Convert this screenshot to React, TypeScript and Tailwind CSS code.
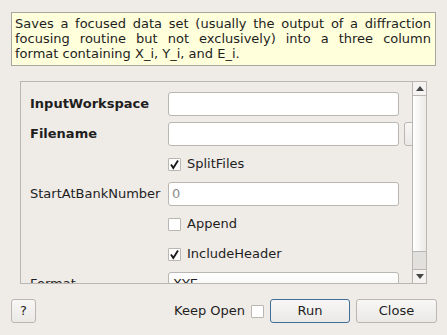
import React from 'react';

function Check({ checked }: { checked?: boolean }) {
  return (
    <div className="w-[13px] h-[13px] shrink-0 border border-[#bab6b1] bg-white rounded-[1px] flex items-center justify-center">
      {checked && (
        <svg width="11" height="11" viewBox="0 0 11 11">
          <path d="M2 5.5 L4.3 9 L9 1.5" fill="none" stroke="#1c1c1c" strokeWidth="1.9" />
        </svg>
      )}
    </div>
  );
}

function Field({ placeholder }: { placeholder?: string }) {
  return (
    <div className="w-[231px] h-[24px] shrink-0 rounded-[3px] border border-[#bab6b1] bg-white flex items-center pl-[3px] text-[#8c8c8c]">
      {placeholder}
    </div>
  );
}

function Arrow({ up }: { up?: boolean }) {
  return (
    <svg width="8" height="5" viewBox="0 0 8 5">
      <path d={up ? 'M0 5 L4 0 L8 5 Z' : 'M0 0 L8 0 L4 5 Z'} fill="#454545" />
    </svg>
  );
}

const btn =
  'h-[24px] rounded-[3px] border bg-gradient-to-b from-[#f8f7f6] to-[#ebe9e6] flex items-center justify-center shrink-0';

export default function App() {
  return (
    <div
      className="w-[447px] h-[335px] bg-[#efebe7] text-[13px] text-[#1e1e1e] overflow-hidden flex flex-col"
      style={{ fontFamily: '"DejaVu Sans", sans-serif' }}
    >
      {/* description tooltip */}
      <div className="mt-[12px] mx-[11px] border border-[#a9a69f] bg-[#ffffdc] pl-[3px] pr-[4px] pt-[3px] pb-[4px] leading-[15px] text-justify">
        Saves a focused data set (usually the output of a diffraction focusing routine but not exclusively) into a three
        column format containing X_i, Y_i, and E_i.
      </div>

      {/* property scroll area */}
      <div className="mt-[15px] ml-[20px] w-[407px] h-[203px] border border-[#bab6b1] flex shrink-0">
        <div className="flex-1 overflow-hidden pl-[9px] pt-[10px] flex flex-col gap-[6px]">
          <div className="h-[24px] flex items-center shrink-0">
            <div className="w-[138px] shrink-0 font-bold">InputWorkspace</div>
            <Field />
          </div>
          <div className="h-[24px] flex items-center shrink-0">
            <div className="w-[138px] shrink-0 font-bold">Filename</div>
            <Field />
            <div className={`${btn} ml-[5px] w-[60px] border-[#bab6b1]`} />
          </div>
          <div className="h-[24px] flex items-center shrink-0 pl-[138px] gap-[6px]">
            <Check checked />
            <span>SplitFiles</span>
          </div>
          <div className="h-[24px] flex items-center shrink-0">
            <div className="w-[138px] shrink-0">StartAtBankNumber</div>
            <Field placeholder="0" />
          </div>
          <div className="h-[24px] flex items-center shrink-0 pl-[138px] gap-[6px]">
            <Check />
            <span>Append</span>
          </div>
          <div className="h-[24px] flex items-center shrink-0 pl-[138px] gap-[6px]">
            <Check checked />
            <span>IncludeHeader</span>
          </div>
          <div className="h-[24px] flex items-center shrink-0">
            <div className="w-[138px] shrink-0">Format</div>
            <div className="w-[231px] h-[24px] shrink-0 rounded-[3px] border border-[#bab6b1] bg-gradient-to-b from-white to-[#f3f2f0] flex items-center pl-[4px] pr-[8px] justify-between">
              <span>XYE</span>
              <div className="w-[8px] h-[2px] bg-[#454545] mt-[8px]" />
            </div>
          </div>
        </div>

        {/* scrollbar */}
        <div className="w-[14px] border-l border-[#bab6b1] flex flex-col shrink-0">
          <div className="h-[14px] border-b border-[#bab6b1] bg-[#f4f3f1] flex items-center justify-center">
            <Arrow up />
          </div>
          <div className="flex-1 bg-gradient-to-r from-white to-[#ebe9e6]" />
          <div className="h-[18px] border-t border-[#bab6b1] bg-[#e2e0dd]" />
          <div className="h-[14px] border-t border-[#bab6b1] bg-[#f4f3f1] flex items-center justify-center">
            <Arrow />
          </div>
        </div>
      </div>

      {/* footer buttons */}
      <div className="mt-[15px] ml-[11px] mr-[10px] flex items-center">
        <div className={`${btn} w-[25px] border-[#bab6b1]`}>?</div>
        <div className="flex-1" />
        <span className="mr-[6px]">Keep Open</span>
        <Check />
        <div className={`${btn} ml-[6px] w-[80px] border-[#3f6f98] from-[#f2f4f6] to-[#e4e8ec]`}>Run</div>
        <div className={`${btn} ml-[6px] w-[81px] border-[#bab6b1]`}>Close</div>
      </div>
    </div>
  );
}
